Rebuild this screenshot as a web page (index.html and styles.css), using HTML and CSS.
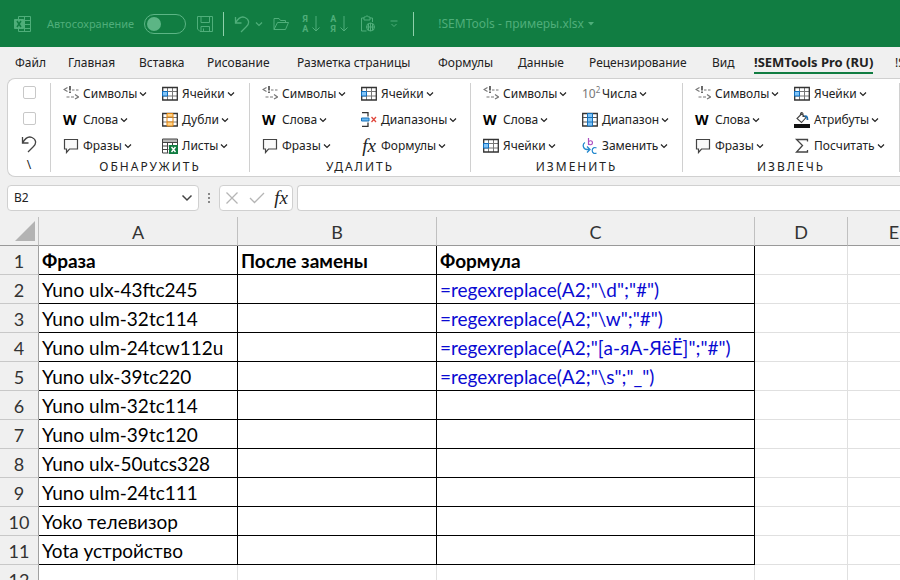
FILE: index.html
```html
<!DOCTYPE html>
<html lang="ru">
<head>
<meta charset="utf-8">
<meta name="viewport" content="width=device-width, initial-scale=1">
<title>!SEMTools - примеры.xlsx</title>
<link rel="stylesheet" href="styles.css">
</head>
<body>
<svg class="sprite" aria-hidden="true">
  <symbol id="i-chars" viewBox="0 0 16 16"><path d="M4.500 1.500 1 3.500l3.500 2M9 4h2.500M13 4h2.500M3.500 11h3M8 11h3M12 8.500l3.500 2.500-3.500 2" fill="none" stroke="#777" stroke-width="1.200"/><path d="M7 0v4.500M7 5.500v1.500" stroke="#444" stroke-width="1.600"/></symbol>
  <symbol id="i-bubble" viewBox="0 0 16 16"><path d="M1.500 1.500h13v9.500H6.500l-3 3.500V11h-2z" fill="#fafafa" stroke="#444" stroke-width="1.200"/></symbol>
  <symbol id="i-cells" viewBox="0 0 16 16"><path d="M1 1h14v13H1z" fill="#fff"/><path d="M5.500 1v13M10.500 1v13M1 5.500h14M1 10h14" stroke="#777" fill="none"/><path d="M.7 1.500h14.600v12.500H.7z" fill="none" stroke="#333" stroke-width="1.300"/><path d="M.5 5.500h5V10h-5z" fill="#83c5f7" stroke="#0f6fc1"/></symbol>
  <symbol id="i-dups" viewBox="0 0 16 16"><path d="M.7 1.500h14.600v12.500H.7z" fill="#fff"/><path d="M1 5.500h14M1 10h14" stroke="#777"/><path d="M.7 1.500h14.600v12.500H.7z" fill="none" stroke="#333" stroke-width="1.300"/><path d="M5 1.500h6v3.500H5zM5 10h6v4H5z" fill="#ffd58b" stroke="#e48712"/><path d="M5 5v5M11 5v5" stroke="#e48712"/></symbol>
  <symbol id="i-sheets" viewBox="0 0 16 16"><path d="M.5 1h15v13H.5z" fill="#fff"/><path d="M.5 1h15v3H.5z" fill="#b9b9b9"/><path d="M.5 15V1h15v6M.5 4.500h15M5.500 5v10M10.500 5v2M.5 8h6M.5 11.500h6M.5 15h6" fill="none" stroke="#444"/><path d="M7 7h9v9H7z" fill="#107c41"/><path d="m9.500 9 4 5M13.500 9l-4 5" stroke="#fff" stroke-width="1.400"/></symbol>
  <symbol id="i-delrange" viewBox="0 0 16 16"><path d="M1 .7h6v3.800M1 14.300h6V10.500" fill="none" stroke="#333" stroke-width="1.300"/><path d="M.5 6h7.500v3H.5z" fill="#6bb8ef" stroke="#1672bd"/><path d="m10.500 5 4.500 5M15 5l-4.500 5" stroke="#e0483e" stroke-width="1.300"/></symbol>
  <symbol id="i-range" viewBox="0 0 16 16"><path d="M.7 1.500h14.600v12.500H.7z" fill="#fff" stroke="#333" stroke-width="1.300"/><path d="M1 5.500h14M1 10h14" stroke="#555"/><path d="M5.500 1.500h5V14h-5z" fill="#83c5f7" stroke="#1672bd"/><path d="M5.500 5.500h5M5.500 10h5" stroke="#1672bd"/></symbol>
  <symbol id="i-arrow-bc" viewBox="0 0 16 16"><path d="M3 4.500C0 6 1 11.500 5 11.500h2M5 8.500l3 3-3 3" fill="none" stroke="#2489ce" stroke-width="1.300"/><path d="M6.500 0v7M6.500 4c1-2 4-1.500 4 .7S7.500 7.500 6.500 5.500" fill="none" stroke="#ad4fc0" stroke-width="1.200"/><path d="M14.500 10c-2-1.200-4.300 0-4.300 2.500s2.300 3.700 4.300 2.500" fill="none" stroke="#2489ce" stroke-width="1.200"/></symbol>
  <symbol id="i-fill" viewBox="0 0 16 16"><path d="M0 12h16v4H0z" fill="#111"/><path d="M7.500 2 3 6.500l4.500 4L12 5.500zM6.500 3c-.5-3 2.500-3 2.500-1v3" fill="none" stroke="#444" stroke-width="1.100"/><path d="M10.500 4.500c1.500-1 3-.5 3 3.500" fill="none" stroke="#1b6eb1" stroke-width="1.800"/></symbol>
  <symbol id="i-sum" viewBox="0 0 16 16"><path d="M13.500 3.500v-2H2.500l6 6-6 6.500h11v-2" fill="none" stroke="#444" stroke-width="1.300"/></symbol>
  <symbol id="i-undo" viewBox="0 0 16 18"><path d="M1.500 2v6h6M1.500 8C4 3.500 7.500 1 11 2.500c4.500 2 4.500 6 1.500 9L7 17" fill="none" stroke="currentColor" stroke-width="1.300"/></symbol>
  <symbol id="i-chev" viewBox="0 0 8 8"><path d="m1 2.500 3 3 3-3" fill="none" stroke="currentColor" stroke-width="1.200"/></symbol>
</svg>

<header class="titlebar">
  <svg class="app" viewBox="0 0 18 18" width="18" height="18" fill="none" stroke="currentColor"><path d="M4.500 4V1.500h12v15h-12V14M10.500 1.500v15M10 5.500h6.500M10 9.500h6.500M10 13.500h6.500"/><path d="M.5 4.500h9v9h-9z" fill="currentColor"/><path d="m3 6 4 6M7 6l-4 6" stroke="#117d42" stroke-width="1.500"/></svg>
  <label class="autosave"><span>Автосохранение</span><input type="checkbox"></label>
  <button class="save" aria-label="Сохранить"><svg viewBox="0 0 18 18" width="18" height="18" fill="none" stroke="currentColor"><path d="M1.500 1.500h15v15H4l-2.500-2.500zM5 1.500v6h8.500v-6M5 16.500v-5h8.500v5M7.500 16v-2.500"/></svg></button>
  <i class="rule"></i>
  <button class="undo" aria-label="Отменить"><svg width="16" height="18"><use href="#i-undo"/></svg><svg width="8" height="8"><use href="#i-chev"/></svg></button>
  <button class="open" aria-label="Открыть"><svg viewBox="0 0 16 14" width="16" height="14" fill="none" stroke="currentColor"><path d="M1 12.500V1.500h5l1.500 2h5v2M1 12.500l3.500-7H15.500l-3 7z"/></svg></button>
  <button class="sort" aria-label="Сортировка по убыванию"><span>Я<br>А</span><svg viewBox="0 0 8 18" width="8" height="18" fill="none" stroke="currentColor"><path d="M4 1v15M.5 12.500 4 16l3.500-3.500"/></svg></button>
  <button class="sort" aria-label="Сортировка по возрастанию"><span>А<br>Я</span><svg viewBox="0 0 8 18" width="8" height="18" fill="none" stroke="currentColor"><path d="M4 1v15M.5 12.500 4 16l3.500-3.500"/></svg></button>
  <button class="paste" aria-label="Вставить"><svg viewBox="0 0 16 18" width="16" height="18" fill="none" stroke="currentColor"><path d="M6.500 16H1.500V3H4M10 3h2.500v4M4 2h1.500C6 .5 8 .5 8.500 2H10v3H4z"/><circle cx="10.500" cy="12" r="4"/><path d="M6.500 12h8M10.500 8v8M8.500 9v6M12.500 9v6"/></svg></button>
  <button class="more" aria-label="Настройка панели"><svg viewBox="0 0 8 8" width="8" height="8" fill="none" stroke="currentColor"><path d="M.5 1h7M1.500 4 4 6.500 6.500 4"/></svg></button>
  <i class="rule"></i>
  <button class="doc">!SEMTools - примеры.xlsx<svg viewBox="0 0 6 4" width="6" height="4" fill="currentColor"><path d="M0 0h6L3 3.500z"/></svg></button>
</header>

<nav class="tabs">
  <a href="#">Файл</a><a href="#">Главная</a><a href="#">Вставка</a><a href="#">Рисование</a><a href="#">Разметка страницы</a><a href="#">Формулы</a><a href="#">Данные</a><a href="#">Рецензирование</a><a href="#">Вид</a><a href="#" class="on">!SEMTools Pro (RU)</a><a href="#">!SEMTools</a>
</nav>

<section class="ribbon">
  <div class="quick">
    <input type="checkbox" aria-label="Параметр 1">
    <input type="checkbox" aria-label="Параметр 2">
    <button aria-label="Отменить"><svg width="16" height="18"><use href="#i-undo"/></svg></button>
    <span>\</span>
  </div>
  <div class="group">
    <div class="cmds">
      <button><svg class="ic"><use href="#i-chars"/></svg>Символы<svg class="ch"><use href="#i-chev"/></svg></button>
      <button><svg class="ic"><use href="#i-cells"/></svg>Ячейки<svg class="ch"><use href="#i-chev"/></svg></button>
      <button><b class="ic w">W</b>Слова<svg class="ch"><use href="#i-chev"/></svg></button>
      <button><svg class="ic"><use href="#i-dups"/></svg>Дубли<svg class="ch"><use href="#i-chev"/></svg></button>
      <button><svg class="ic"><use href="#i-bubble"/></svg>Фразы<svg class="ch"><use href="#i-chev"/></svg></button>
      <button><svg class="ic"><use href="#i-sheets"/></svg>Листы<svg class="ch"><use href="#i-chev"/></svg></button>
    </div>
    <h2>ОБНАРУЖИТЬ</h2>
  </div>
  <div class="group wide">
    <div class="cmds">
      <button><svg class="ic"><use href="#i-chars"/></svg>Символы<svg class="ch"><use href="#i-chev"/></svg></button>
      <button><svg class="ic"><use href="#i-cells"/></svg>Ячейки<svg class="ch"><use href="#i-chev"/></svg></button>
      <button><b class="ic w">W</b>Слова<svg class="ch"><use href="#i-chev"/></svg></button>
      <button><svg class="ic"><use href="#i-delrange"/></svg>Диапазоны<svg class="ch"><use href="#i-chev"/></svg></button>
      <button><svg class="ic"><use href="#i-bubble"/></svg>Фразы<svg class="ch"><use href="#i-chev"/></svg></button>
      <button><i class="ic fx">fx</i>Формулы<svg class="ch"><use href="#i-chev"/></svg></button>
    </div>
    <h2>УДАЛИТЬ</h2>
  </div>
  <div class="group mid">
    <div class="cmds">
      <button><svg class="ic"><use href="#i-chars"/></svg>Символы<svg class="ch"><use href="#i-chev"/></svg></button>
      <button><span class="ic ten">10<sup>2</sup></span>Числа<svg class="ch"><use href="#i-chev"/></svg></button>
      <button><b class="ic w">W</b>Слова<svg class="ch"><use href="#i-chev"/></svg></button>
      <button><svg class="ic"><use href="#i-range"/></svg>Диапазон<svg class="ch"><use href="#i-chev"/></svg></button>
      <button><svg class="ic"><use href="#i-cells"/></svg>Ячейки<svg class="ch"><use href="#i-chev"/></svg></button>
      <button><svg class="ic"><use href="#i-arrow-bc"/></svg>Заменить<svg class="ch"><use href="#i-chev"/></svg></button>
    </div>
    <h2>ИЗМЕНИТЬ</h2>
  </div>
  <div class="group last">
    <div class="cmds">
      <button><svg class="ic"><use href="#i-chars"/></svg>Символы<svg class="ch"><use href="#i-chev"/></svg></button>
      <button><svg class="ic"><use href="#i-cells"/></svg>Ячейки<svg class="ch"><use href="#i-chev"/></svg></button>
      <button><b class="ic w">W</b>Слова<svg class="ch"><use href="#i-chev"/></svg></button>
      <button><svg class="ic"><use href="#i-fill"/></svg>Атрибуты<svg class="ch"><use href="#i-chev"/></svg></button>
      <button><svg class="ic"><use href="#i-bubble"/></svg>Фразы<svg class="ch"><use href="#i-chev"/></svg></button>
      <button><svg class="ic"><use href="#i-sum"/></svg>Посчитать<svg class="ch"><use href="#i-chev"/></svg></button>
    </div>
    <h2>ИЗВЛЕЧЬ</h2>
  </div>
</section>

<section class="formula">
  <div class="namebox"><input type="text" value="B2" aria-label="Имя ячейки"><svg viewBox="0 0 12 8" width="12" height="8" fill="none" stroke="#444" stroke-width="1.500"><path d="m1.500 1.500 4.500 4.500 4.500-4.500"/></svg></div>
  <svg class="dots" viewBox="0 0 4 12" width="4" height="12" fill="#888"><path d="M1 1h2v2H1zM1 5h2v2H1zM1 9h2v2H1z"/></svg>
  <div class="actions">
    <button aria-label="Отмена"><svg viewBox="0 0 14 14" width="14" height="14" fill="none" stroke="#b5b5b5" stroke-width="1.300"><path d="m1.500 1.500 11 11M12.500 1.500l-11 11"/></svg></button>
    <button aria-label="Ввод"><svg viewBox="0 0 16 12" width="16" height="12" fill="none" stroke="#b5b5b5" stroke-width="1.300"><path d="m1 6 4.500 4.500L15 1"/></svg></button>
    <button class="fx" aria-label="Вставить функцию">fx</button>
  </div>
  <input class="entry" type="text" aria-label="Строка формул">
</section>

<main class="sheet">
<table>
  <colgroup><col class="c-n"><col class="c-a"><col class="c-a"><col class="c-c"><col class="c-d"><col class="c-d"></colgroup>
  <thead><tr><th class="corner"><svg viewBox="0 0 20 20" width="20" height="20"><path d="M20 0v20H0z" fill="#b3b3b3"/></svg></th><th>A</th><th>B</th><th>C</th><th>D</th><th>E</th></tr></thead>
  <tbody class="data">
  <tr class="head"><th>1</th><td>Фраза</td><td>После замены</td><td>Формула</td><td></td><td></td></tr>
  <tr><th>2</th><td>Yuno ulx-43ftc245</td><td></td><td>=regexreplace(A2;"\d";"#")</td><td></td><td></td></tr>
  <tr><th>3</th><td>Yuno ulm-32tc114</td><td></td><td>=regexreplace(A2;"\w";"#")</td><td></td><td></td></tr>
  <tr><th>4</th><td>Yuno ulm-24tcw112u</td><td></td><td>=regexreplace(A2;"[а-яА-ЯёЁ]";"#")</td><td></td><td></td></tr>
  <tr><th>5</th><td>Yuno ulx-39tc220</td><td></td><td>=regexreplace(A2;"\s";"_")</td><td></td><td></td></tr>
  <tr><th>6</th><td>Yuno ulm-32tc114</td><td></td><td></td><td></td><td></td></tr>
  <tr><th>7</th><td>Yuno ulm-39tc120</td><td></td><td></td><td></td><td></td></tr>
  <tr><th>8</th><td>Yuno ulx-50utcs328</td><td></td><td></td><td></td><td></td></tr>
  <tr><th>9</th><td>Yuno ulm-24tc111</td><td></td><td></td><td></td><td></td></tr>
  <tr><th>10</th><td>Yoko телевизор</td><td></td><td></td><td></td><td></td></tr>
  <tr><th>11</th><td>Yota устройство</td><td></td><td></td><td></td><td></td></tr>
  </tbody>
  <tbody><tr><th>12</th><td></td><td></td><td></td><td></td><td></td></tr></tbody>
</table>
</main>
</body>
</html>
```
FILE: styles.css
```css
* { box-sizing: border-box; }

body {
  margin: 0;
  height: 100vh;
  overflow: hidden;
  display: flex;
  flex-direction: column;
  background: #f0f0f0;
  color: #222;
  font: 12px/16px "Noto Sans", "Open Sans", sans-serif;
}

button {
  border: 0;
  padding: 0;
  background: none;
  color: inherit;
  font: inherit;
  white-space: nowrap;
}

svg { flex: none; display: block; }
.sprite { display: none; }

/* title bar */
.titlebar {
  flex: none;
  display: flex;
  align-items: center;
  height: 47px;
  padding-left: 14px;
  background: #117d42;
  color: #4fae7a;
}
.titlebar button { display: flex; align-items: center; }
.autosave { display: flex; align-items: center; gap: 10px; margin: 0 10px 0 15px; font-size: 11px; }
.autosave input {
  appearance: none;
  width: 42px;
  height: 20px;
  margin: 0;
  padding: 2px;
  border: 1px solid #5cb585;
  border-radius: 10px;
}
.autosave input::before {
  content: "";
  display: block;
  width: 14px;
  height: 14px;
  border-radius: 50%;
  background: #5cb585;
}
.rule { width: 1px; height: 24px; background: #8fd0ab; }
.save { margin-right: 9px; }
.titlebar .undo { gap: 5px; margin: 0 10px; }
.open { margin-right: 13px; }
.titlebar .sort { gap: 4px; margin-right: 10px; font: 700 9px/10px Roboto, sans-serif; }
.paste { margin: 0 14px 0 2px; }
.more { margin-right: 15px; }
.titlebar .doc { gap: 4px; margin-left: 24px; }

/* tabs */
.tabs {
  flex: none;
  display: grid;
  grid-template-columns: 53px 71px 68px 90px 141px 80px 71px 123px 42px 141px 90px;
  height: 31px;
  padding-left: 15px;
  overflow: hidden;
}
.tabs a {
  justify-self: start;
  height: 27px;
  padding-top: 8px;
  color: #222;
  text-decoration: none;
  white-space: nowrap;
}
.tabs .on { font-size: 13px; line-height: 15px; font-weight: 700; border-bottom: 2px solid #117d42; }

/* ribbon */
.ribbon {
  flex: none;
  display: flex;
  height: 99px;
  margin-left: 7px;
  padding: 4px 0;
  background: #fff;
  border: 1px solid #d0d0d0;
  border-right: 0;
  border-radius: 8px 0 0 8px;
  overflow: hidden;
}
.quick { width: 42px; display: flex; flex-direction: column; align-items: center; }
.quick > * { flex: none; }
.quick input {
  appearance: none;
  width: 13px;
  height: 13px;
  margin: 3px 0 10px;
  border: 1px solid #c8c8c8;
  border-radius: 2px;
}
.quick button { height: 18px; margin-bottom: 4px; color: #444; }
.group { width: 199px; flex: none; padding-left: 12px; border-left: 1px solid #d0d0d0; }
.wide { width: 221px; }
.mid { width: 212px; }
.last { width: 218px; border-right: 1px solid #d0d0d0; }
.cmds { display: grid; grid-template-columns: 99px 1fr; grid-auto-rows: 26px; height: 75px; margin-top: -2px; }
.cmds button { display: flex; align-items: center; }
.ic { flex: none; width: 16px; height: 16px; margin-right: 4px; }
.w { font: 700 14px/16px "Noto Sans", sans-serif; color: #000; text-align: left; }
.fx { font: italic 19px/16px "Liberation Serif", serif; color: #222; }
.ten { color: #777; font-size: 12px; white-space: nowrap; text-align: left; }
.ten sup { font-size: 8px; line-height: 0; }
.ch { width: 8px; height: 8px; margin-left: 2px; }
.group h2 {
  margin: 3px 0 0 -12px;
  font-size: 12px;
  line-height: 16px;
  font-weight: 400;
  letter-spacing: 2px;
  text-align: center;
}

/* formula bar */
.formula { flex: none; display: flex; align-items: center; margin: 8px 0 6px 7px; }
.namebox, .actions, .entry { height: 26px; background: #fff; border: 1px solid #d0d0d0; border-radius: 4px; }
.namebox { width: 192px; display: flex; align-items: center; padding: 0 5px 0 6px; }
.namebox input { flex: 1; min-width: 0; border: 0; padding: 0; background: none; font: inherit; color: #222; }
.dots { margin: 0 8px; }
.actions { width: 74px; display: flex; align-items: center; justify-content: space-between; padding: 0 4px 0 5px; }
.entry { flex: 1; min-width: 0; margin-left: 4px; border-right: 0; border-radius: 4px 0 0 4px; }

/* sheet */
.sheet { flex: 1; min-height: 0; overflow: hidden; }
table { table-layout: fixed; width: 941px; border-collapse: separate; border-spacing: 0; }
.c-n { width: 39px; }
.c-a { width: 199px; }
.c-c { width: 318px; }
.c-d { width: 93px; }
th, td {
  height: 29px;
  padding: 1px 3px 0;
  font: 19px/24px Lato, "Noto Sans", sans-serif;
  white-space: nowrap;
  text-align: left;
}
th {
  padding: 1px 0 0;
  background: #f0f0f0;
  border-right: 1px solid #a0a0a0;
  border-bottom: 1px solid #c8c8c8;
  color: #333;
  font-size: 18px;
  text-align: center;
}
thead th { border-right-color: #c0c0c0; border-bottom-color: #999; }
.corner { padding: 4px 3px 4px 0; }
.corner svg { margin-left: auto; }
td { background: #fff; border-right: 1px solid #e0e0e0; border-bottom: 1px solid #e0e0e0; color: #000; }
.data td:nth-child(-n+4) { border-color: #000; }
.data td:nth-child(4) { color: #0a0ad2; }
.data .head td { font-weight: 700; color: #000; }
```
